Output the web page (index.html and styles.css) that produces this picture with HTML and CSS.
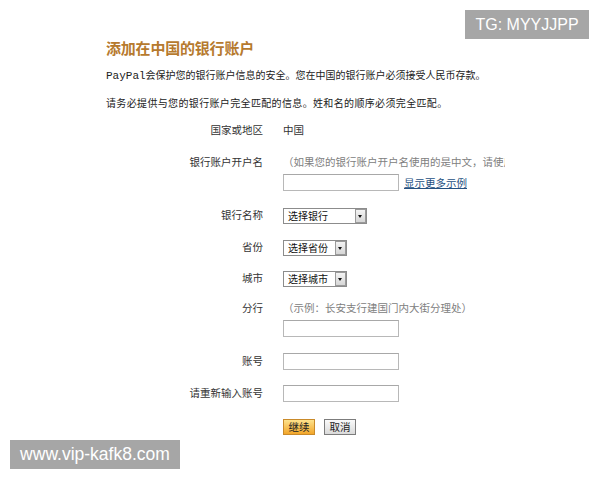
FILE: index.html
```html
<!DOCTYPE html>
<html lang="zh">
<head>
<meta charset="utf-8">
<link rel="stylesheet" href="styles.css">
</head>
<body>
<div class="page">
  <h1 class="title">添加在中国的银行账户</h1>
  <p class="intro intro-1"><span class="pp">PayPal</span>会保护您的银行账户信息的安全。您在中国的银行账户必须接受人民币存款。</p>
  <p class="intro intro-2">请务必提供与您的银行账户完全匹配的信息。姓和名的顺序必须完全匹配。</p>

  <div class="form">
    <div class="row row-country">
      <div class="label">国家或地区</div>
      <div class="field">中国</div>
    </div>
    <div class="row row-name">
      <div class="label">银行账户开户名</div>
      <div class="field">
        <div class="hint clip">（如果您的银行账户开户名使用的是中文，请使用中文填写）</div>
        <div class="inline">
          <span class="input"></span>
          <a class="link" href="#">显示更多示例</a>
        </div>
      </div>
    </div>
    <div class="row row-sel row-bank">
      <div class="label">银行名称</div>
      <div class="field">
        <span class="select wide"><span class="sel-text">选择银行</span><span class="arrow"></span></span>
      </div>
    </div>
    <div class="row row-sel row-province">
      <div class="label">省份</div>
      <div class="field">
        <span class="select"><span class="sel-text">选择省份</span><span class="arrow"></span></span>
      </div>
    </div>
    <div class="row row-sel">
      <div class="label">城市</div>
      <div class="field">
        <span class="select"><span class="sel-text">选择城市</span><span class="arrow"></span></span>
      </div>
    </div>
    <div class="row row-branch">
      <div class="label">分行</div>
      <div class="field">
        <div class="hint">（示例：长安支行建国门内大街分理处）</div>
        <span class="input"></span>
      </div>
    </div>
    <div class="row row-input row-account">
      <div class="label">账号</div>
      <div class="field"><span class="input"></span></div>
    </div>
    <div class="row row-input">
      <div class="label">请重新输入账号</div>
      <div class="field"><span class="input"></span></div>
    </div>
    <div class="row row-buttons">
      <div class="label"></div>
      <div class="field buttons">
        <span class="btn btn-primary">继续</span>
        <span class="btn btn-cancel">取消</span>
      </div>
    </div>
  </div>
</div>
<div class="badge badge-top">TG: MYYJJPP</div>
<div class="badge badge-bottom">www.vip-kafk8.com</div>
</body>
</html>
```

FILE: styles.css
```css
html, body {
  margin: 0;
  padding: 0;
  background: #ffffff;
}
body {
  width: 600px;
  height: 480px;
  position: relative;
  overflow: hidden;
  font-family: "Noto Sans CJK SC", "Noto Sans", sans-serif;
  color: #333333;
}
.page {
  padding: 38px 0 0 106px;
}
.title {
  margin: 0;
  font-size: 15px;
  line-height: 20px;
  font-weight: bold;
  color: #b67a2e;
  letter-spacing: -0.2px;
}
.intro {
  margin: 0;
  line-height: 14px;
  color: #222222;
  font-size: 10px;
}
.intro-1 {
  margin-top: 10px;
}
.intro-2 {
  margin-top: 13px;
  letter-spacing: 0.35px;
}
.pp {
  font-family: "Liberation Mono", monospace;
  font-size: 11px;
  letter-spacing: 0;
}
.form {
  margin-top: 12px;
  display: flex;
  flex-direction: column;
  gap: 15px;
}
.row {
  display: grid;
  grid-template-columns: 157px 1fr;
  column-gap: 20px;
  font-size: 10.5px;
  line-height: 16px;
}
.label {
  text-align: right;
  color: #333333;
}
.field {
  color: #333333;
}
.row-name { margin-top: 1px; }
.row-bank { margin-top: 2px; }
.row-province { margin-top: 1px; }
.row-branch { margin-top: -2px; }
.row-account { margin-top: 1px; }
.row-buttons { margin-top: 2px; }
.hint {
  color: #808080;
  white-space: nowrap;
}
.clip {
  width: 222px;
  overflow: hidden;
}
.inline {
  margin-top: 4px;
  display: flex;
  align-items: center;
  gap: 5px;
}
.input {
  display: block;
  width: 114px;
  height: 15px;
  border: 1px solid #b8b8b8;
  border-top-color: #a8a8a8;
  background: #ffffff;
}
.row-branch .input {
  margin-top: 4px;
}
.link {
  color: #25507f;
  text-decoration: underline;
  font-size: 10.5px;
  line-height: 14px;
}
.row-sel .label {
  line-height: 14px;
}
.select {
  display: flex;
  align-items: stretch;
  width: 62px;
  height: 14px;
  border: 1px solid #8c8c8c;
  background: #ffffff;
}
.select.wide { width: 82px; }
.sel-text {
  flex: 1;
  font-size: 10px;
  line-height: 14px;
  padding-left: 4px;
  color: #111111;
  white-space: nowrap;
  overflow: hidden;
}
.arrow {
  position: relative;
  width: 9px;
  border: 1px solid #9a9a9a;
  background: linear-gradient(#f4f4f4, #d6d6d6);
}
.arrow::after {
  content: "";
  position: absolute;
  left: 2px;
  top: 5px;
  border-left: 2.5px solid transparent;
  border-right: 2.5px solid transparent;
  border-top: 3px solid #111111;
}
.buttons {
  display: flex;
  gap: 9px;
}
.btn {
  display: block;
  width: 30px;
  height: 14px;
  font-size: 10.5px;
  line-height: 14px;
  text-align: center;
  color: #222222;
}
.btn-primary {
  border: 1px solid #c98a2a;
  background: linear-gradient(#fde28c, #f2a62a);
}
.btn-cancel {
  border: 1px solid #7c7c7c;
  background: linear-gradient(#fafafa, #dadada);
}
.badge {
  position: absolute;
  background: #a6a6a6;
  color: #ffffff;
  font-family: "Liberation Sans", Arial, sans-serif;
  text-align: center;
}
.badge-top {
  left: 465px;
  top: 10px;
  width: 124px;
  height: 29px;
  line-height: 29px;
  font-size: 16px;
}
.badge-bottom {
  left: 10px;
  top: 440px;
  width: 170px;
  height: 29px;
  line-height: 29px;
  font-size: 17.5px;
}
```
